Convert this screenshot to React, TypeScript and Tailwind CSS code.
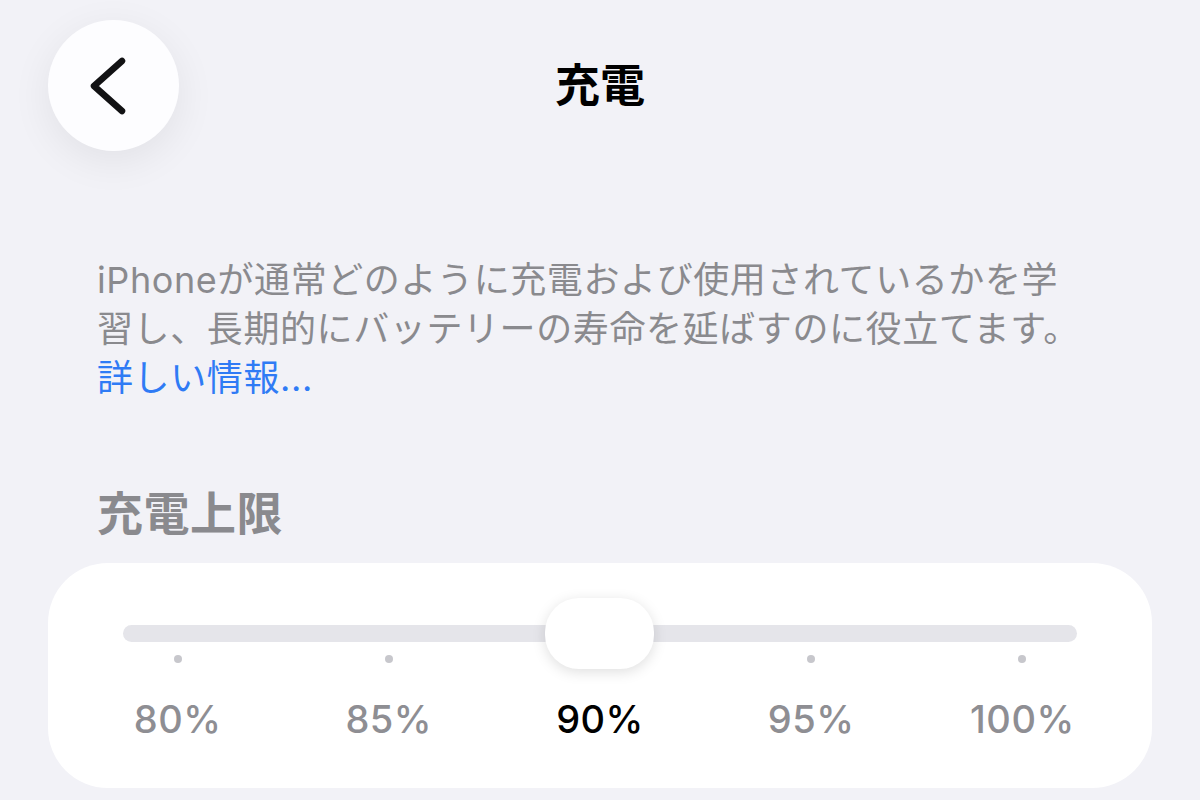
import React from "react";

const labels = ["80%", "85%", "90%", "95%", "100%"];

export default function App() {
  return (
    <div
      className="w-[1200px] h-[800px] overflow-hidden bg-[#f2f2f7]"
      style={{ fontFamily: 'Inter, "Noto Sans CJK JP", sans-serif' }}
    >
      {/* Nav bar */}
      <div className="grid grid-cols-[131px_1fr_131px] items-center px-[48px] pt-[20px]">
        <button className="w-[131px] h-[131px] rounded-full bg-[#fdfdff] shadow-[0_10px_40px_rgba(0,0,0,0.07)] flex items-center justify-center">
          <svg width="131" height="131" viewBox="0 0 131 131">
            <polyline
              points="74,41 46,66 74,91"
              fill="none"
              stroke="#121214"
              strokeWidth="6.5"
              strokeLinecap="round"
              strokeLinejoin="round"
            />
          </svg>
        </button>
        <div className="text-center text-[45px] font-bold text-black leading-[56px]">充電</div>
        <div />
      </div>

      {/* Description */}
      <div className="mt-[105px] px-[97px] text-[36px] leading-[49px] tracking-[0.6px] text-[#8a8a8e] whitespace-nowrap">
        <div>iPhoneが通常どのように充電および使用されているかを学</div>
        <div>習し、長期的にバッテリーの寿命を延ばすのに役立てます。</div>
        <div className="text-[#2f7bf5]">詳しい情報...</div>
      </div>

      {/* Section header */}
      <div className="mt-[82px] px-[97px] text-[46px] leading-[56px] tracking-[0.5px] font-bold text-[#8a8a8e]">
        充電上限
      </div>

      {/* Card */}
      <div className="mt-[22px] mx-[48px] bg-white rounded-[60px] pt-[62px] pb-[47px]">
        <div className="relative mx-[75px] h-[17px] rounded-full bg-[#e5e5ea]">
          <div className="absolute left-[422px] top-[-27px] w-[109px] h-[71px] rounded-[34px] bg-white shadow-[0_3px_14px_rgba(0,0,0,0.13)]" />
        </div>
        <div className="grid grid-cols-5 px-[24px] mt-[13px]">
          {labels.map((l, i) => (
            <div key={l} className="flex justify-center">
              <div className={`w-[8px] h-[8px] rounded-full ${i === 2 ? "bg-transparent" : "bg-[#c7c7cc]"}`} />
            </div>
          ))}
        </div>
        <div className="grid grid-cols-5 px-[24px] mt-[34px]">
          {labels.map((l, i) => (
            <div
              key={l}
              className={`text-center text-[38px] leading-[44px] tracking-[0.5px] font-medium ${i === 2 ? "text-black" : "text-[#8e8e93]"}`}
            >
              {l}
            </div>
          ))}
        </div>
      </div>
    </div>
  );
}
